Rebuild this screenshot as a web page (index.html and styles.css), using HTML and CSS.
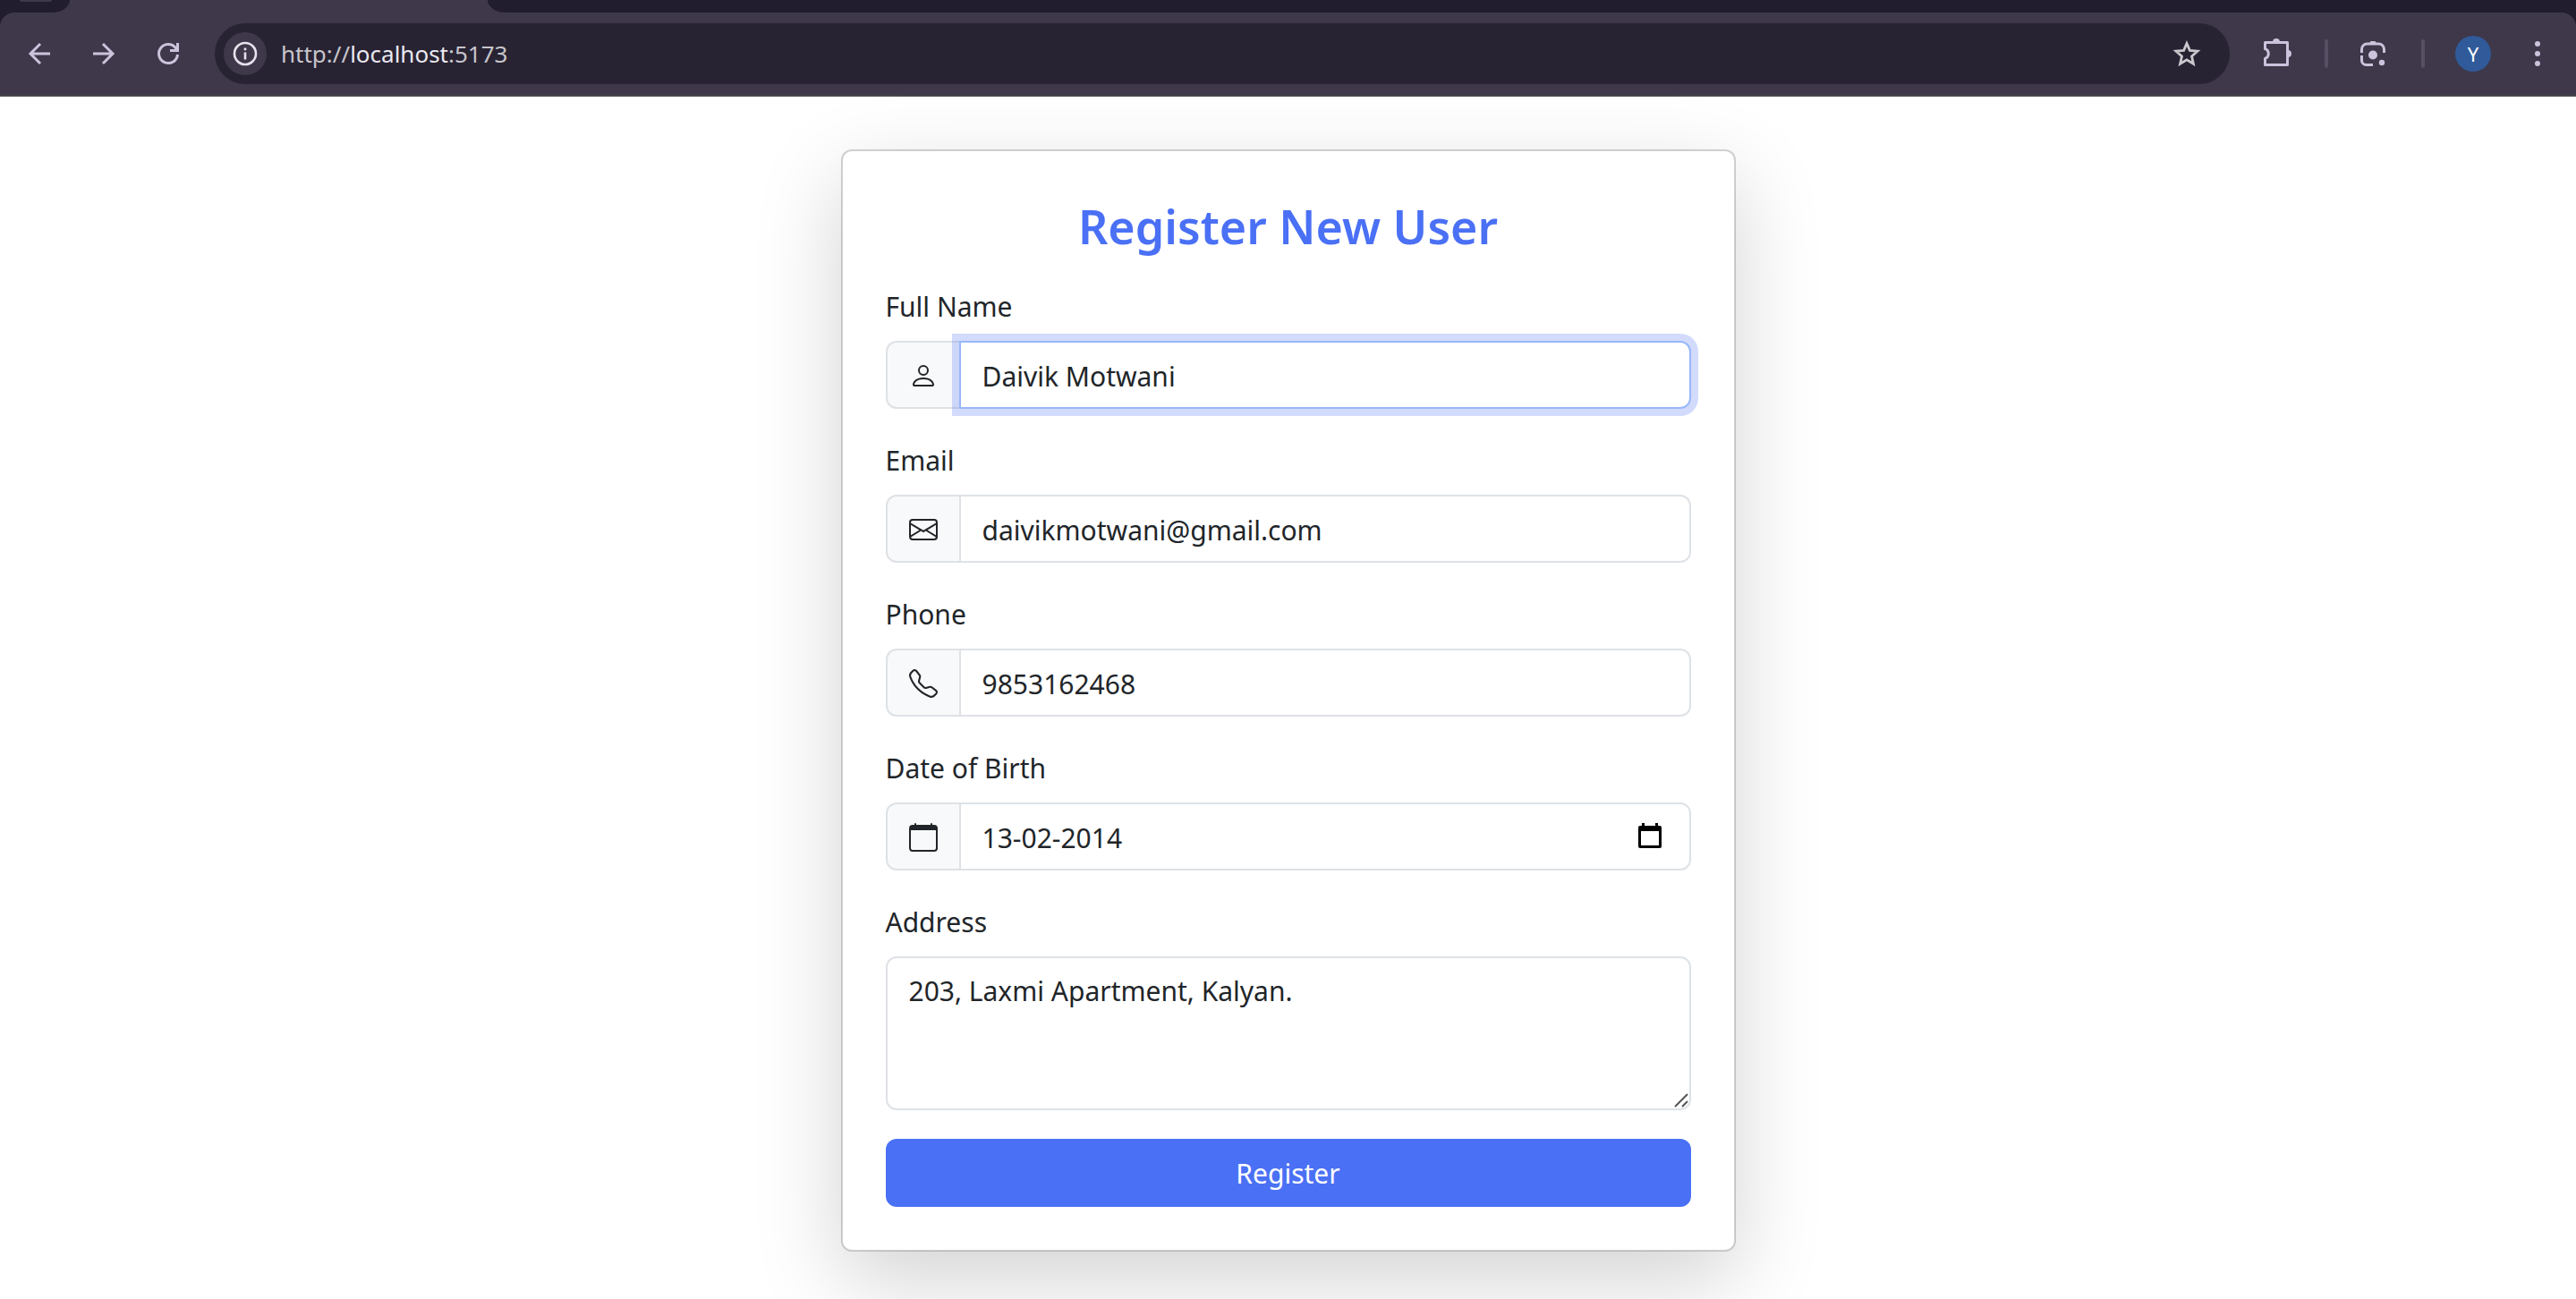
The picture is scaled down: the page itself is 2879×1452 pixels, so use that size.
FILE: index.html
```html
<!DOCTYPE html>
<html lang="en">
<head>
<meta charset="utf-8">
<title>Register New User</title>
<link rel="stylesheet" href="styles.css">
</head>
<body>
<header class="browser">
  <div class="tabstrip">
    <div class="tab-previous"><span class="tab-hint"></span></div>
    <div class="tab-active"></div>
    <div class="tab-rest"></div>
  </div>
  <div class="toolbar-frame">
    <div class="toolbar">
      <nav class="nav-buttons" aria-label="Navigation">
        <button class="icon-button" type="button" aria-label="Back">
          <svg viewBox="0 0 32 32" fill="none" stroke="currentColor" stroke-width="3"><path d="M28 16H6M17 5L6 16l11 11"/></svg>
        </button>
        <button class="icon-button" type="button" aria-label="Forward">
          <svg viewBox="0 0 32 32" fill="none" stroke="currentColor" stroke-width="3"><path d="M4 16h22M15 5l11 11-11 11"/></svg>
        </button>
        <button class="icon-button" type="button" aria-label="Reload">
          <svg viewBox="0 0 32 32" fill="none" stroke="currentColor" stroke-width="3"><path d="M26.500 17A10.500 10.500 0 1 1 24 9.200L26.500 12M26.500 4v8.500H18"/></svg>
        </button>
      </nav>
      <div class="omnibox">
        <button class="site-info" type="button" aria-label="Site information">
          <svg viewBox="0 0 28 28" fill="none" stroke="currentColor" stroke-width="2.600"><circle cx="14" cy="14" r="12"/><path d="M14 12.500v8M14 7.500v2.800"/></svg>
        </button>
        <div class="address"><span>http://</span><span class="host">localhost</span><span>:5173</span></div>
        <button class="icon-button star" type="button" aria-label="Bookmark">
          <svg viewBox="0 0 32 32" fill="none" stroke="currentColor" stroke-width="2.800"><path d="M16 4.500l3.400 7.900 8.600.8-6.500 5.700 1.900 8.400L16 22.800l-7.400 4.500 1.900-8.400L4 13.200l8.600-.8z"/></svg>
        </button>
      </div>
      <div class="actions">
        <button class="icon-button wide" type="button" aria-label="Extensions">
          <svg viewBox="0 0 36 36"><path fill="none" stroke="currentColor" stroke-width="3" stroke-linejoin="round" d="M3.500 5.500h25v25h-25v-7.200a5.600 5.600 0 0 0 0-10.600z"/><path fill="currentColor" d="M12 5a4 4 0 0 1 8 0zM29 14a4 4 0 0 1 0 8z"/></svg>
        </button>
        <span class="divider"></span>
        <button class="icon-button wide" type="button" aria-label="Search with Lens">
          <svg viewBox="0 0 36 36"><path fill="none" stroke="currentColor" stroke-width="3" d="M3.500 17v-4a6 6 0 0 1 6-6h13a6 6 0 0 1 6 6v4M3.500 20v5.500a5 5 0 0 0 5 5H16"/><path fill="currentColor" d="M12 7l1.500-3h5L20 7z"/><circle cx="16" cy="19.500" r="5" fill="currentColor"/><circle cx="26" cy="28" r="3.200" fill="currentColor"/></svg>
        </button>
        <span class="divider"></span>
        <button class="avatar" type="button">Y</button>
        <button class="icon-button wide" type="button" aria-label="Menu">
          <svg viewBox="0 0 36 36" fill="currentColor"><circle cx="18" cy="7" r="3"/><circle cx="18" cy="18" r="3"/><circle cx="18" cy="29" r="3"/></svg>
        </button>
      </div>
    </div>
  </div>
</header>

<main class="page">
  <form class="card">
    <h1 class="title">Register New User</h1>

    <div class="field">
      <label for="name">Full Name</label>
      <div class="input-group">
        <span class="addon"><svg viewBox="0 0 16 16" fill="currentColor"><path d="M8 8a3 3 0 1 0 0-6 3 3 0 0 0 0 6m2-3a2 2 0 1 1-4 0 2 2 0 0 1 4 0m4 8c0 1-1 1-1 1H3s-1 0-1-1 1-4 6-4 6 3 6 4m-1-.004c-.001-.246-.154-.986-.832-1.664C11.516 10.680 10.289 10 8 10s-3.516.680-4.168 1.332c-.678.678-.830 1.418-.832 1.664z"/></svg></span>
        <input class="control focused" id="name" type="text" value="Daivik Motwani">
      </div>
    </div>

    <div class="field">
      <label for="email">Email</label>
      <div class="input-group">
        <span class="addon"><svg viewBox="0 0 16 16" fill="currentColor"><path d="M0 4a2 2 0 0 1 2-2h12a2 2 0 0 1 2 2v8a2 2 0 0 1-2 2H2a2 2 0 0 1-2-2zm2-1a1 1 0 0 0-1 1v.217l7 4.200 7-4.200V4a1 1 0 0 0-1-1zm13 2.383-4.708 2.825L15 11.105zm-.034 6.876-5.640-3.471L8 9.583l-1.326-.795-5.640 3.470A1 1 0 0 0 2 13h12a1 1 0 0 0 .966-.741M1 11.105l4.708-2.897L1 5.383z"/></svg></span>
        <input class="control" id="email" type="email" value="daivikmotwani@gmail.com">
      </div>
    </div>

    <div class="field">
      <label for="phone">Phone</label>
      <div class="input-group">
        <span class="addon"><svg viewBox="0 0 16 16" fill="currentColor"><path d="M3.654 1.328a.678.678 0 0 0-1.015-.063L1.605 2.300c-.483.484-.661 1.169-.450 1.770a17.600 17.600 0 0 0 4.168 6.608 17.600 17.600 0 0 0 6.608 4.168c.601.211 1.286.033 1.770-.450l1.034-1.034a.678.678 0 0 0-.063-1.015l-2.307-1.794a.680.680 0 0 0-.580-.122l-2.190.547a1.750 1.750 0 0 1-1.657-.459L5.482 8.062a1.750 1.750 0 0 1-.460-1.657l.548-2.190a.680.680 0 0 0-.122-.580zM1.884.511a1.745 1.745 0 0 1 2.612.163L6.290 2.980c.329.423.445.974.315 1.494l-.547 2.190a.680.680 0 0 0 .178.643l2.457 2.457a.680.680 0 0 0 .644.178l2.189-.547a1.750 1.750 0 0 1 1.494.315l2.306 1.794c.829.645.905 1.870.163 2.611l-1.034 1.034c-.740.740-1.846 1.065-2.877.702a18.600 18.600 0 0 1-7.010-4.420 18.600 18.600 0 0 1-4.420-7.009c-.362-1.030-.037-2.137.703-2.877z"/></svg></span>
        <input class="control" id="phone" type="tel" value="9853162468">
      </div>
    </div>

    <div class="field">
      <label for="dob">Date of Birth</label>
      <div class="input-group">
        <span class="addon"><svg viewBox="0 0 16 16" fill="currentColor"><path d="M3.500 0a.5.5 0 0 1 .5.5V1h8V.5a.5.5 0 0 1 1 0V1h1a2 2 0 0 1 2 2v11a2 2 0 0 1-2 2H2a2 2 0 0 1-2-2V3a2 2 0 0 1 2-2h1V.5a.5.5 0 0 1 .5-.5M1 4v10a1 1 0 0 0 1 1h12a1 1 0 0 0 1-1V4z"/></svg></span>
        <input class="control" id="dob" type="text" value="13-02-2014">
        <button class="picker" type="button" aria-label="Choose date">
          <svg viewBox="0 0 26 28"><path d="M4 0h3v3h12V0h3v3h2a2 2 0 0 1 2 2v21a2 2 0 0 1-2 2H2a2 2 0 0 1-2-2V5a2 2 0 0 1 2-2h2zM3 9v16h20V9z"/></svg>
        </button>
      </div>
    </div>

    <div class="field">
      <label for="address">Address</label>
      <div class="textarea-wrap">
        <textarea class="control" id="address" rows="3">203, Laxmi Apartment, Kalyan.</textarea>
        <svg class="grip" viewBox="0 0 16 16" fill="none" stroke="#555" stroke-width="2"><path d="M1 15L15 1M9 15l6-6"/></svg>
      </div>
    </div>

    <button class="submit" type="submit">Register</button>
  </form>
</main>
</body>
</html>
```
FILE: styles.css
```css
*,
*::before,
*::after {
  box-sizing: border-box;
}

:root {
  --strip: #221d2e;
  --toolbar: #3e384a;
  --field: #282333;
  --icon: #cbc3dc;
  --text: #212529;
  --line: #dee2e6;
  --primary: #4a70f5;
}

body {
  min-height: 100vh;
  margin: 0;
  background: #fff;
  color: var(--text);
  font: 30px/48px "Noto Sans", "Open Sans", sans-serif;
}

button {
  font: inherit;
  border: 0;
  padding: 0;
  background: none;
  color: inherit;
}

svg {
  display: block;
}

/* Browser frame */
.tabstrip {
  display: flex;
  height: 14px;
  background: var(--toolbar);
}

.tab-previous {
  width: 78px;
  padding-left: 22px;
  background: var(--strip);
  border-bottom-right-radius: 20px 14px;
}

.tab-hint {
  display: block;
  width: 36px;
  height: 2px;
  border-radius: 0 0 12px 12px;
  background: var(--toolbar);
}

.tab-active {
  width: 467px;
}

.tab-rest {
  flex: 1;
  background: var(--strip);
  border-bottom-left-radius: 20px 14px;
}

.toolbar-frame {
  background: var(--strip);
}

.toolbar {
  display: flex;
  align-items: center;
  padding: 12px 25px 12px 28px;
  border-bottom: 2px solid #47454c;
  border-radius: 16px 16px 0 0;
  background: var(--toolbar);
  color: var(--icon);
}

.nav-buttons {
  display: flex;
  gap: 40px;
}

.icon-button {
  width: 32px;
}

.icon-button.wide {
  width: 36px;
}

.omnibox {
  flex: 1;
  display: flex;
  align-items: center;
  height: 68px;
  margin: 0 36px;
  padding: 0 32px 0 10px;
  border-radius: 34px;
  background: var(--field);
}

.site-info {
  display: grid;
  place-items: center;
  width: 48px;
  height: 48px;
  border-radius: 50%;
  background: var(--toolbar);
  color: #e6e1ec;
}

.site-info svg {
  width: 28px;
}

.address {
  flex: 1;
  padding-left: 16px;
  color: #c7c5cb;
  font-size: 26px;
}

.host {
  color: #eae8f0;
}

.star {
  color: #cac8cc;
}

.actions {
  display: flex;
  align-items: center;
  gap: 34px;
}

.divider {
  width: 4px;
  height: 32px;
  border-radius: 2px;
  background: #564f64;
}

.avatar {
  width: 40px;
  height: 40px;
  border-radius: 50%;
  background: #305a99;
  color: #fff;
  font-size: 22px;
  line-height: 40px;
}

/* Registration form */
.page {
  display: flex;
  justify-content: center;
  padding: 59px 24px 53px;
}

.card {
  width: 100%;
  max-width: 1000px;
  padding: 48px;
  border: 2px solid rgba(0, 0, 0, 0.175);
  border-radius: 12px;
  background: #fff;
  background-clip: padding-box;
  box-shadow: 0 32px 96px rgba(0, 0, 0, 0.175);
}

.title {
  margin: 0 0 28px;
  color: var(--primary);
  font-size: 52px;
  font-weight: 600;
  line-height: 72px;
  text-align: center;
}

.field {
  margin-bottom: 32px;
}

.field label {
  display: block;
  margin-bottom: 12px;
  line-height: 52px;
}

.input-group {
  display: flex;
  position: relative;
}

.addon {
  display: flex;
  align-items: center;
  padding: 2px 24px 0;
  border: 2px solid var(--line);
  border-radius: 12px 0 0 12px;
  background: #f8f9fa;
}

.addon svg {
  width: 32px;
}

.control {
  display: block;
  width: 100%;
  margin: 0;
  padding: 13px 24px 11px;
  border: 2px solid var(--line);
  border-radius: 12px;
  outline: 0;
  background: #fff;
  color: inherit;
  font: inherit;
}

.input-group .control {
  flex: 1;
  min-width: 0;
  height: 76px;
  margin-left: -2px;
  border-radius: 0 12px 12px 0;
}

.input-group .focused {
  position: relative;
  border-color: #98b7fa;
  box-shadow: 0 0 0 8px rgba(74, 112, 245, 0.25);
}

.picker {
  position: absolute;
  top: 23px;
  right: 33px;
  width: 26px;
}

.textarea-wrap {
  position: relative;
}

textarea.control {
  height: 172px;
  resize: none;
}

.grip {
  position: absolute;
  right: 3px;
  bottom: 3px;
  width: 16px;
}

.submit {
  display: block;
  width: 100%;
  height: 76px;
  padding-top: 2px;
  border-radius: 12px;
  background: var(--primary);
  color: #fff;
}
```
